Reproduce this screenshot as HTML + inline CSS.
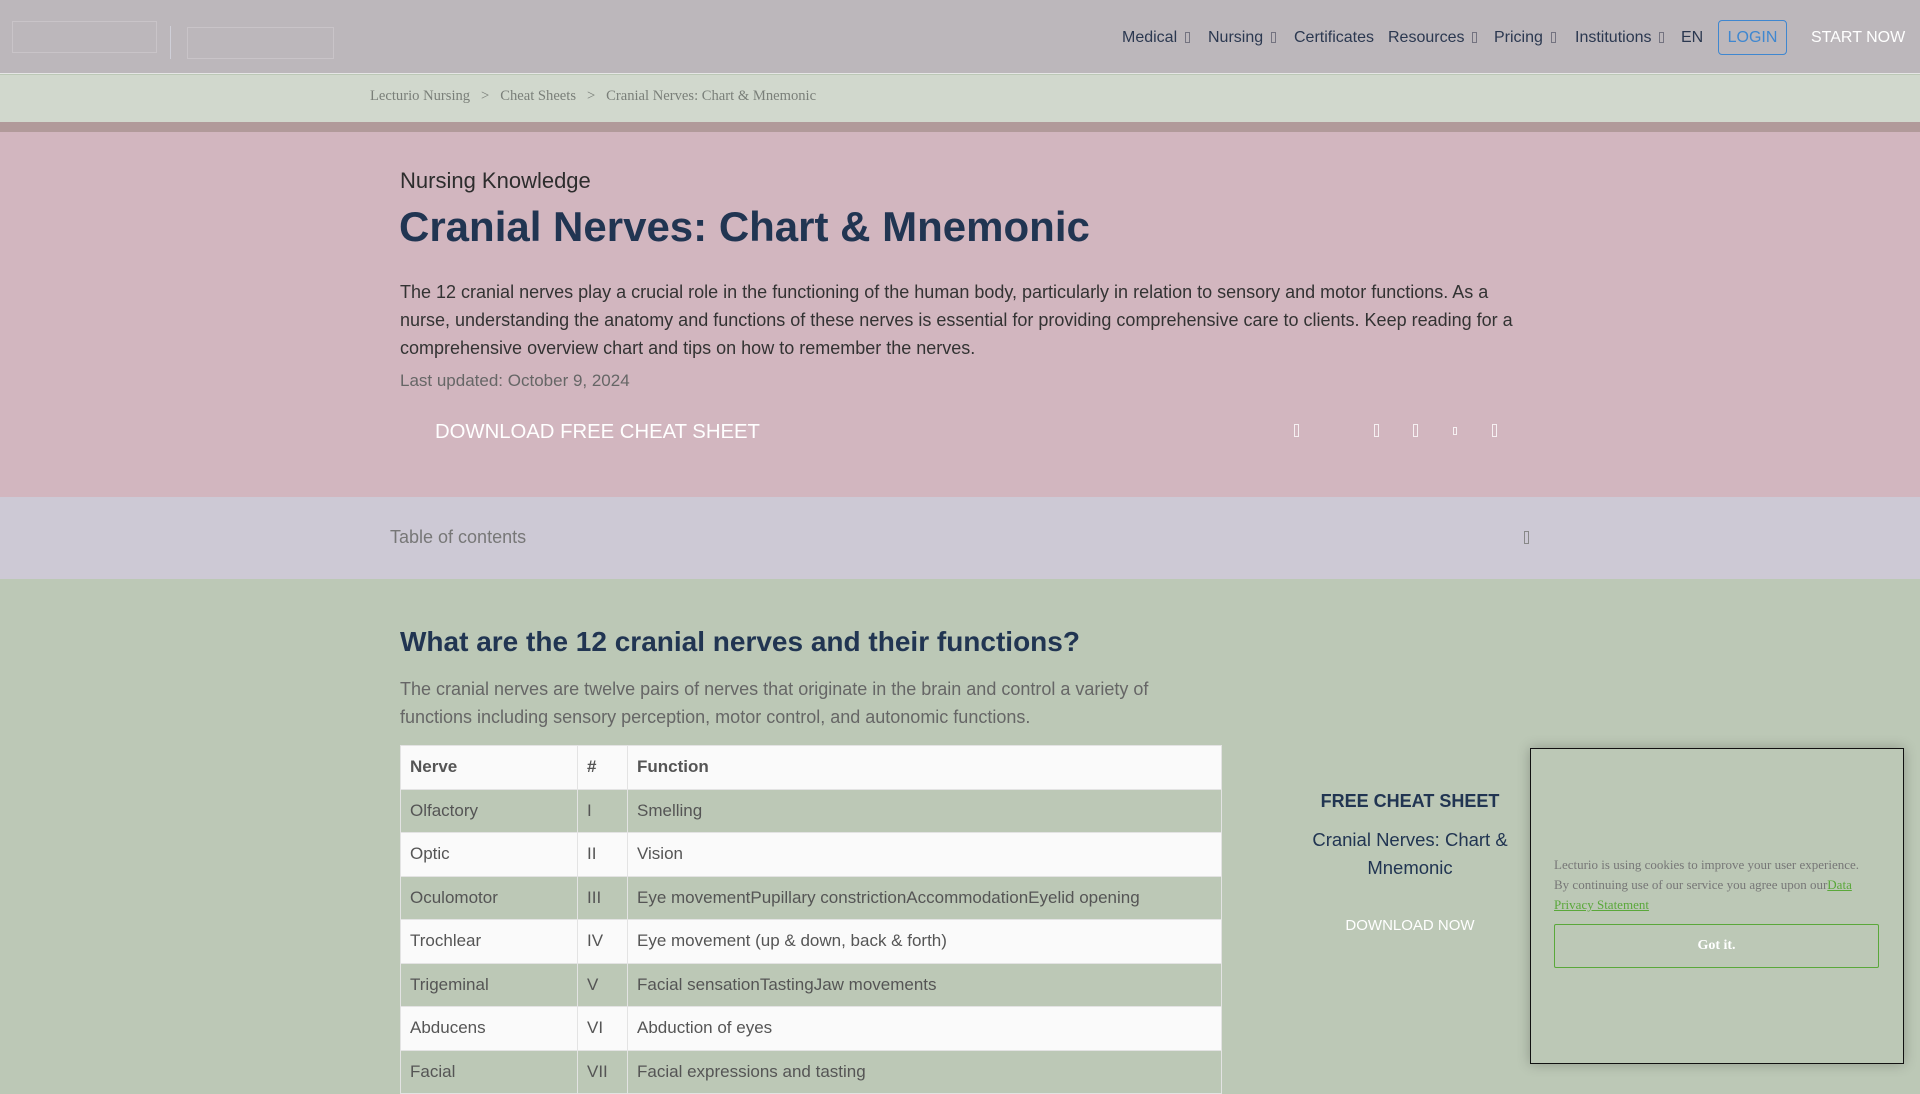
<!DOCTYPE html>
<html><head><meta charset="utf-8"><style>
*{margin:0;padding:0;box-sizing:border-box}
body{width:1920px;height:1080px;overflow:hidden;background:#bcc8b6;font-family:"Liberation Sans",Arial,sans-serif;position:relative}
.abs{position:absolute;white-space:nowrap}
.hdr{position:absolute;left:0;top:0;width:1920px;height:74px;background:#bcb7bb;border-bottom:1px solid #e6e6e6}
.nav{font-size:16px;color:#2b3850;top:29px}
.car{display:inline-block;width:5px;height:11px;border:1px solid #556;margin-left:8px;vertical-align:-1px;opacity:.7}
.bc{position:absolute;left:0;top:75px;width:1920px;height:47px;background:#d1d8cd}
.strip{position:absolute;left:0;top:122px;width:1920px;height:10px;background:#b19a9a}
.pink{position:absolute;left:0;top:132px;width:1920px;height:365px;background:#d2b6bf}
.toc{position:absolute;left:0;top:497px;width:1920px;height:82px;background:#cdc9d5}
.ic{position:absolute;width:5px;height:13px;border:1px solid rgba(255,255,255,.8);top:424px}
table{position:absolute;left:400px;top:745px;width:822px;border-collapse:collapse;font-size:17px;color:#555}
td{height:43.5px;padding:0 9px;border:1px solid #e3e3e3;vertical-align:middle}
tr.w td{background:#fafafa}
th{height:43.5px;padding:0 9px;border:1px solid #e3e3e3;text-align:left;background:#fafafa;font-weight:bold;color:#555}
</style></head><body>
<div class="hdr"></div>
<div class="abs" style="left:12px;top:21px;width:145px;height:32px;border:1px solid #c9c4c8"></div>
<div class="abs" style="left:170px;top:26px;width:1px;height:33px;background:#cfcfd8"></div>
<div class="abs" style="left:187px;top:27px;width:147px;height:32px;border:1px solid #c9c4c8"></div>
<div class="abs nav" style="left:1122px">Medical<span class="car"></span></div>
<div class="abs nav" style="left:1208px">Nursing<span class="car"></span></div>
<div class="abs nav" style="left:1294px">Certificates</div>
<div class="abs nav" style="left:1388px">Resources<span class="car"></span></div>
<div class="abs nav" style="left:1494px">Pricing<span class="car"></span></div>
<div class="abs nav" style="left:1575px">Institutions<span class="car"></span></div>
<div class="abs nav" style="left:1681px">EN</div>
<div class="abs" style="left:1718px;top:20px;width:69px;height:35px;border:1px solid #3f87d0;border-radius:4px;color:#3f87d0;font-size:16px;text-align:center;line-height:33px">LOGIN</div>
<div class="abs nav" style="left:1811px;color:#fff">START NOW</div>

<div class="bc"></div>
<div class="abs" style="left:370px;top:88px;font-family:'Liberation Serif',serif;font-size:14.6px;color:#7a7f79">Lecturio Nursing &nbsp;&nbsp;&gt;&nbsp;&nbsp; Cheat Sheets &nbsp;&nbsp;&gt;&nbsp;&nbsp; Cranial Nerves: Chart &amp; Mnemonic</div>
<div class="strip"></div>
<div class="pink"></div>
<div class="abs" style="left:400px;top:168px;font-size:22px;color:#2d2d2d">Nursing Knowledge</div>
<div class="abs" style="left:399px;top:203px;font-size:42px;font-weight:bold;color:#213552">Cranial Nerves: Chart &amp; Mnemonic</div>
<div class="abs" style="left:400px;top:278px;width:1130px;white-space:normal;font-size:18px;line-height:28px;color:#333">The 12 cranial nerves play a crucial role in the functioning of the human body, particularly in relation to sensory and motor functions. As a nurse, understanding the anatomy and functions of these nerves is essential for providing comprehensive care to clients. Keep reading for a comprehensive overview chart and tips on how to remember the nerves.</div>
<div class="abs" style="left:400px;top:371px;font-size:17px;color:#666">Last updated: October 9, 2024</div>
<div class="abs" style="left:435px;top:421px;font-size:20.3px;color:#fff">DOWNLOAD FREE CHEAT SHEET</div>
<div class="ic" style="left:1294px"></div>
<div class="ic" style="left:1374px"></div>
<div class="ic" style="left:1413px"></div>
<div class="ic" style="left:1453px;top:427px;width:4px;height:8px"></div>
<div class="ic" style="left:1492px"></div>
<div class="toc"></div>
<div class="abs" style="left:390px;top:527px;font-size:18px;color:#777">Table of contents</div>
<div class="abs" style="left:1524px;top:531px;width:5px;height:13px;border:1px solid #888"></div>

<div class="abs" style="left:400px;top:626px;font-size:28px;font-weight:bold;color:#213552">What are the 12 cranial nerves and their functions?</div>
<div class="abs" style="left:400px;top:675px;width:780px;white-space:normal;font-size:18px;line-height:28px;color:#666">The cranial nerves are twelve pairs of nerves that originate in the brain and control a variety of functions including sensory perception, motor control, and autonomic functions.</div>
<table>
<tr><th style="width:177px">Nerve</th><th style="width:50px">#</th><th>Function</th></tr>
<tr><td>Olfactory</td><td>I</td><td>Smelling</td></tr>
<tr class="w"><td>Optic</td><td>II</td><td>Vision</td></tr>
<tr><td>Oculomotor</td><td>III</td><td>Eye movementPupillary constrictionAccommodationEyelid opening</td></tr>
<tr class="w"><td>Trochlear</td><td>IV</td><td>Eye movement (up &amp; down, back &amp; forth)</td></tr>
<tr><td>Trigeminal</td><td>V</td><td>Facial sensationTastingJaw movements</td></tr>
<tr class="w"><td>Abducens</td><td>VI</td><td>Abduction of eyes</td></tr>
<tr><td>Facial</td><td>VII</td><td>Facial expressions and tasting</td></tr>
</table>

<div class="abs" style="left:1260px;width:300px;text-align:center;top:791px;font-size:18px;font-weight:bold;color:#213552">FREE CHEAT SHEET</div>
<div class="abs" style="left:1260px;width:300px;text-align:center;top:826px;font-size:18.5px;line-height:28px;color:#213552;white-space:normal">Cranial Nerves: Chart &amp;<br>Mnemonic</div>
<div class="abs" style="left:1260px;width:300px;text-align:center;top:917px;font-size:15px;color:#fff">DOWNLOAD NOW</div>

<div class="abs" style="left:1530px;top:748px;width:374px;height:316px;border:1.5px solid #111;box-shadow:0 0 12px rgba(0,0,0,.25);background:#bcc8b6"></div>
<div class="abs" style="left:1554px;top:855px;width:306px;white-space:normal;font-family:'Liberation Serif',serif;font-size:13px;line-height:20px;color:#777">Lecturio is using cookies to improve your user experience. By continuing use of our service you agree upon our<span style="color:#5aa83a;text-decoration:underline">Data Privacy Statement</span></div>
<div class="abs" style="left:1554px;top:924px;width:325px;height:44px;border:1px solid #5aa83a;border-radius:2px;text-align:center;line-height:42px;font-family:'Liberation Serif',serif;font-weight:bold;font-size:14px;color:#fff">Got it.</div>
</body></html>
